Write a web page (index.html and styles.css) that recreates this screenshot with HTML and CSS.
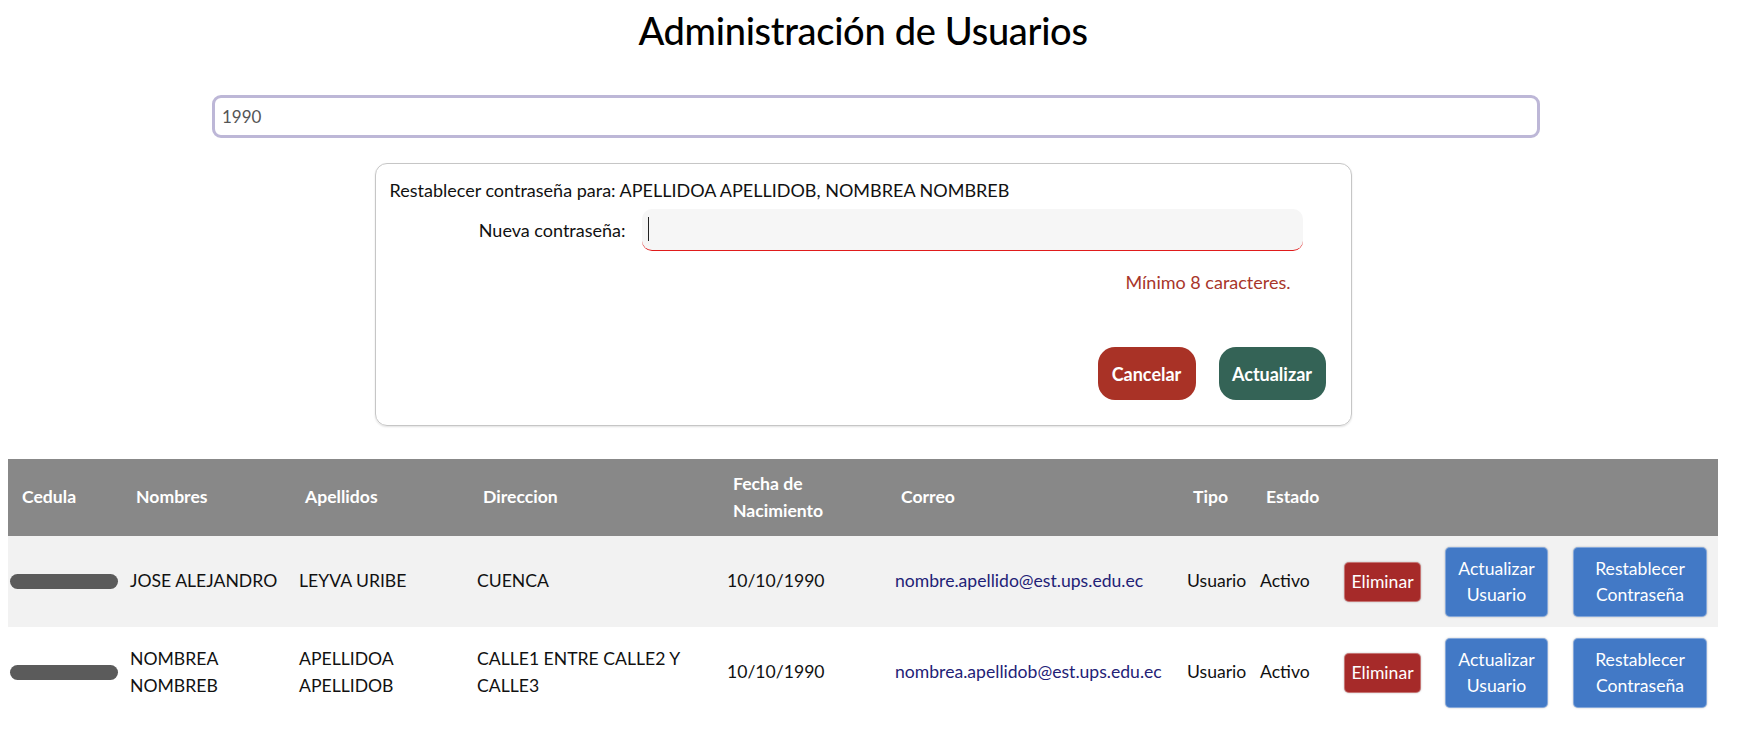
FILE: index.html
```html
<!DOCTYPE html>
<html lang="es">
<head>
<meta charset="utf-8">
<title>Administración de Usuarios</title>
<link rel="stylesheet" href="styles.css">
</head>
<body>
<div class="page">
  <h1 class="title">Administración de Usuarios</h1>
  <div class="search-row">
    <input class="search" type="text" value="1990">
  </div>
  <div class="reset-card">
    <p class="reset-for">Restablecer contraseña para: APELLIDOA APELLIDOB, NOMBREA NOMBREB</p>
    <div class="reset-grid">
      <label class="reset-label">Nueva contraseña:</label>
      <div class="pw-input"><span class="caret"></span></div>
      <span></span>
      <p class="pw-error">Mínimo 8 caracteres.</p>
    </div>
    <div class="reset-actions">
      <button class="btn-pill btn-cancel">Cancelar</button>
      <button class="btn-pill btn-update">Actualizar</button>
    </div>
  </div>
  <table class="users">
    <colgroup>
      <col class="c-ced"><col class="c-nom"><col class="c-ape"><col class="c-dir"><col class="c-fec"><col class="c-cor"><col class="c-tip"><col class="c-est"><col class="c-b1"><col class="c-b2"><col class="c-b3">
    </colgroup>
    <thead>
      <tr>
        <th>Cedula</th><th>Nombres</th><th>Apellidos</th><th>Direccion</th><th>Fecha de Nacimiento</th><th>Correo</th><th>Tipo</th><th>Estado</th><th></th><th></th><th></th>
      </tr>
    </thead>
    <tbody>
      <tr class="odd">
        <td><span class="redact"></span></td>
        <td>JOSE ALEJANDRO</td>
        <td>LEYVA URIBE</td>
        <td>CUENCA</td>
        <td>10/10/1990</td>
        <td class="mail">nombre.apellido@est.ups.edu.ec</td>
        <td>Usuario</td>
        <td>Activo</td>
        <td><button class="btn-sq btn-del">Eliminar</button></td>
        <td><button class="btn-sq btn-blue w-upd">Actualizar Usuario</button></td>
        <td><button class="btn-sq btn-blue w-rst">Restablecer Contraseña</button></td>
      </tr>
      <tr>
        <td><span class="redact"></span></td>
        <td>NOMBREA NOMBREB</td>
        <td>APELLIDOA APELLIDOB</td>
        <td>CALLE1 ENTRE CALLE2 Y CALLE3</td>
        <td>10/10/1990</td>
        <td class="mail">nombrea.apellidob@est.ups.edu.ec</td>
        <td>Usuario</td>
        <td>Activo</td>
        <td><button class="btn-sq btn-del">Eliminar</button></td>
        <td><button class="btn-sq btn-blue w-upd">Actualizar Usuario</button></td>
        <td><button class="btn-sq btn-blue w-rst">Restablecer Contraseña</button></td>
      </tr>
    </tbody>
  </table>
</div>
</body>
</html>
```

FILE: styles.css
```css
* { box-sizing: border-box; }
body {
  margin: 8px;
  font-family: "Lato", "Noto Sans", sans-serif;
  color: #111;
  background: #fff;
}
.page { width: 1710px; }
.title {
  margin: 0;
  height: 87px;
  text-align: center;
  font-size: 38px;
  line-height: 44px;
  letter-spacing: -0.3px;
  font-weight: 500;
  color: #000;
}
.search-row { padding-left: 204px; }
.search {
  display: block;
  width: 1328px;
  height: 43px;
  border: 3px solid #bdb7d7;
  border-radius: 9px;
  padding: 0 7px;
  font-family: inherit;
  font-size: 17px;
  color: #555;
  outline: none;
}
.reset-card {
  width: 977px;
  margin: 25px auto 0;
  border: 1px solid #c6c6c6;
  border-radius: 12px;
  box-shadow: 0 1px 2px rgba(0,0,0,0.12);
  padding: 13px 25px 25px 14px;
}
.reset-for {
  margin: 0;
  font-size: 18px;
  line-height: 26px;
}
.reset-grid {
  display: grid;
  grid-template-columns: 236px 661px;
  column-gap: 16px;
  margin-top: 6px;
}
.reset-label {
  text-align: right;
  font-size: 18px;
  line-height: 42px;
}
.pw-input {
  height: 42px;
  background: #f6f6f6;
  border-radius: 10px;
  border-bottom: 1px solid #e01b1b;
  padding: 8px 6px;
}
.caret {
  display: block;
  width: 1px;
  height: 24px;
  background: #222;
}
.pw-error {
  margin: 18px 0 0;
  text-align: right;
  padding-right: 12px;
  font-size: 18px;
  line-height: 26px;
  color: #a8362a;
}
.reset-actions {
  display: flex;
  justify-content: flex-end;
  gap: 23px;
  margin-top: 52px;
}
.btn-pill {
  height: 53px;
  border: none;
  border-radius: 17px;
  color: #fff;
  font-family: inherit;
  font-size: 18px;
  font-weight: 700;
  padding: 0 10px;
}
.btn-cancel { background: #a93226; width: 98px; }
.btn-update { background: #346356; width: 107px; }

.users {
  margin-top: 33px;
  width: 1710px;
  table-layout: fixed;
  border-collapse: collapse;
  font-size: 17.6px;
  line-height: 26.5px;
}
.c-ced { width: 114px; }
.c-nom { width: 169px; }
.c-ape { width: 178px; }
.c-dir { width: 250px; }
.c-fec { width: 168px; }
.c-cor { width: 292px; }
.c-tip { width: 73px; }
.c-est { width: 80px; }
.c-b1 { width: 101px; }
.c-b2 { width: 128px; }
.c-b3 { width: 157px; }
.users th {
  background: #888;
  color: #fff;
  font-weight: 700;
  text-align: left;
  padding: 12px 6px 12px 14px;
  vertical-align: middle;
}
.users td {
  padding: 8px 4px 8px 8px;
  vertical-align: middle;
  color: #111;
}
.users tr.odd td { background: #f2f2f2; }
.users td.mail { color: #1f2277; white-space: nowrap; }
.redact {
  display: block;
  width: 108px;
  height: 15px;
  margin-left: -6px;
  background: #5b5b5b;
  border-radius: 8px;
}
.btn-sq {
  display: block;
  margin: 2.5px 0 2.5px 4px;
  border: 1px solid rgba(255,255,255,0.35);
  border-radius: 5px;
  color: #fff;
  font-family: inherit;
  font-size: 17.6px;
  line-height: 26px;
  padding: 6px 6px;
  box-shadow: 0 0 2px rgba(0,0,0,0.25);
}
.btn-del { background: #a62a29; width: 77px; padding: 6px 4px; }
.btn-blue { background: #4279c6; padding: 8px 6px; }
.w-upd { width: 103px; }
.w-rst { width: 134px; }
```
